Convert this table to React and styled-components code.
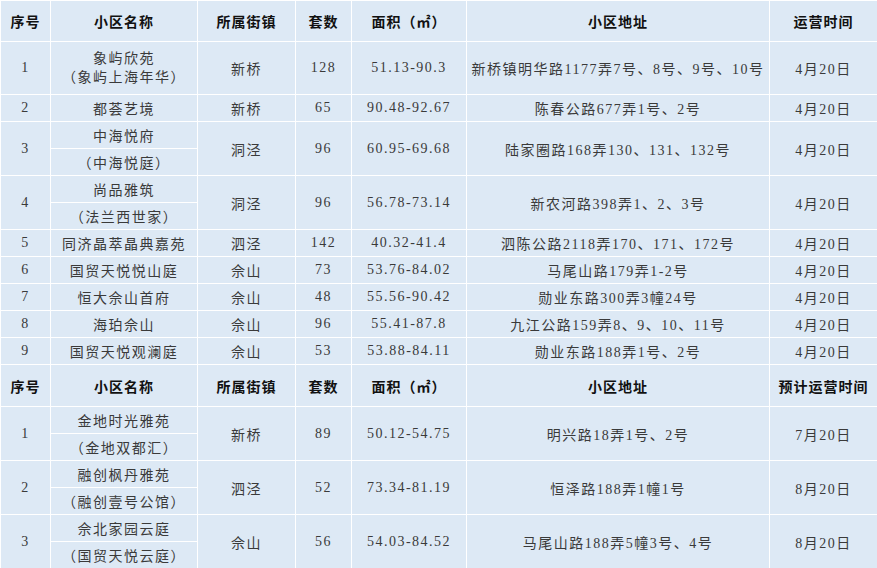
import React from 'react';
import styled, { createGlobalStyle } from 'styled-components';

const GlobalStyle = createGlobalStyle`
  html, body {
    margin: 0;
    padding: 0;
    background: #ffffff;
    overflow: hidden;
  }
`;

const Table = styled.table`
  width: 877px;
  border-collapse: collapse;
  table-layout: fixed;
  background-color: #dde9f5;
  font-family: "Liberation Serif", "Noto Sans CJK SC", serif;
  font-size: 14px;
  color: #3a3a3a;
  letter-spacing: 1.5px;
`;

const Row = styled.tr`
  height: ${(p) => p.$h}px;
`;

const HeadCell = styled.th`
  border: 1px solid #ffffff;
  padding: 0;
  text-align: center;
  vertical-align: middle;
  font-family: "Noto Sans CJK SC", sans-serif;
  font-weight: 700;
  font-size: 14px;
  color: #111111;
  letter-spacing: 1px;
  white-space: nowrap;
`;

const Cell = styled.td`
  border: 1px solid #ffffff;
  padding: 0;
  text-align: center;
  vertical-align: middle;
  white-space: nowrap;
  line-height: ${(p) => (p.$stack ? '19px' : 'normal')};
`;

const widths = [50, 147, 98, 56, 115, 303, 108];

const firstRows = [
  { no: 1, name: ['象屿欣苑', '（象屿上海年华）'], stack: true, town: '新桥', count: 128, area: '51.13-90.3', addr: '新桥镇明华路1177弄7号、8号、9号、10号', date: '4月20日' },
  { no: 2, name: ['都荟艺境'], town: '新桥', count: 65, area: '90.48-92.67', addr: '陈春公路677弄1号、2号', date: '4月20日' },
  { no: 3, name: ['中海悦府', '（中海悦庭）'], town: '洞泾', count: 96, area: '60.95-69.68', addr: '陆家圈路168弄130、131、132号', date: '4月20日' },
  { no: 4, name: ['尚品雅筑', '（法兰西世家）'], town: '洞泾', count: 96, area: '56.78-73.14', addr: '新农河路398弄1、2、3号', date: '4月20日' },
  { no: 5, name: ['同济晶萃晶典嘉苑'], town: '泗泾', count: 142, area: '40.32-41.4', addr: '泗陈公路2118弄170、171、172号', date: '4月20日' },
  { no: 6, name: ['国贸天悦悦山庭'], town: '佘山', count: 73, area: '53.76-84.02', addr: '马尾山路179弄1-2号', date: '4月20日' },
  { no: 7, name: ['恒大佘山首府'], town: '佘山', count: 48, area: '55.56-90.42', addr: '勋业东路300弄3幢24号', date: '4月20日' },
  { no: 8, name: ['海珀佘山'], town: '佘山', count: 96, area: '55.41-87.8', addr: '九江公路159弄8、9、10、11号', date: '4月20日' },
  { no: 9, name: ['国贸天悦观澜庭'], town: '佘山', count: 53, area: '53.88-84.11', addr: '勋业东路188弄1号、2号', date: '4月20日' },
];

const secondRows = [
  { no: 1, name: ['金地时光雅苑', '（金地双都汇）'], town: '新桥', count: 89, area: '50.12-54.75', addr: '明兴路18弄1号、2号', date: '7月20日' },
  { no: 2, name: ['融创枫丹雅苑', '（融创壹号公馆）'], town: '泗泾', count: 52, area: '73.34-81.19', addr: '恒泽路188弄1幢1号', date: '8月20日' },
  { no: 3, name: ['佘北家园云庭', '（国贸天悦云庭）'], town: '佘山', count: 56, area: '54.03-84.52', addr: '马尾山路188弄5幢3号、4号', date: '8月20日' },
];

const Header = ({ last, h }) => (
  <Row $h={h}>
    <HeadCell>序号</HeadCell>
    <HeadCell>小区名称</HeadCell>
    <HeadCell>所属街镇</HeadCell>
    <HeadCell>套数</HeadCell>
    <HeadCell>面积（㎡）</HeadCell>
    <HeadCell>小区地址</HeadCell>
    <HeadCell>{last}</HeadCell>
  </Row>
);

const DataRows = ({ r }) => {
  if (r.name.length === 1 || r.stack) {
    return (
      <Row $h={r.stack ? 53 : 27}>
        <Cell>{r.no}</Cell>
        <Cell $stack={r.stack}>
          {r.name.map((n, i) => (
            <div key={i}>{n}</div>
          ))}
        </Cell>
        <Cell>{r.town}</Cell>
        <Cell>{r.count}</Cell>
        <Cell>{r.area}</Cell>
        <Cell>{r.addr}</Cell>
        <Cell>{r.date}</Cell>
      </Row>
    );
  }
  return (
    <>
      <Row $h={27}>
        <Cell rowSpan={2}>{r.no}</Cell>
        <Cell>{r.name[0]}</Cell>
        <Cell rowSpan={2}>{r.town}</Cell>
        <Cell rowSpan={2}>{r.count}</Cell>
        <Cell rowSpan={2}>{r.area}</Cell>
        <Cell rowSpan={2}>{r.addr}</Cell>
        <Cell rowSpan={2}>{r.date}</Cell>
      </Row>
      <Row $h={27}>
        <Cell>{r.name[1]}</Cell>
      </Row>
    </>
  );
};

const App = () => (
  <>
    <GlobalStyle />
    <Table>
      <colgroup>
        {widths.map((w, i) => (
          <col key={i} style={{ width: w }} />
        ))}
      </colgroup>
      <tbody>
        <Header last="运营时间" h={41} />
        {firstRows.map((r) => (
          <DataRows key={'a' + r.no} r={r} />
        ))}
        <Header last="预计运营时间" h={42} />
        {secondRows.map((r) => (
          <DataRows key={'b' + r.no} r={r} />
        ))}
      </tbody>
    </Table>
  </>
);

export default App;
